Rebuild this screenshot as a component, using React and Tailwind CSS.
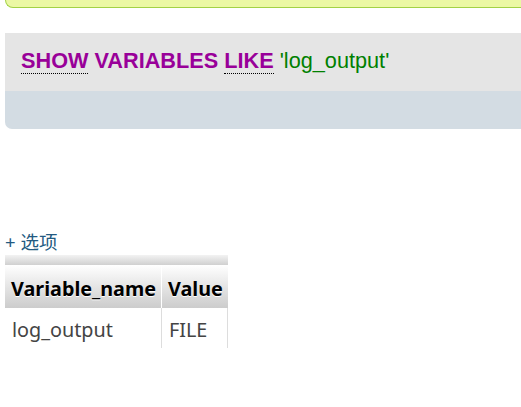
import React from "react";

const App = () => {
  return (
    <div className="w-[521px] h-[407px] overflow-hidden bg-white relative">
      {/* notice bar */}
      <div className="ml-[5px] w-[530px] h-[8px] bg-[#ebf8a4] border-l border-b border-[#a2d246] rounded-bl-[10px]" />

      {/* sql query box */}
      <div className="ml-[5px] mt-[25px] w-[530px] rounded-bl-[7px] overflow-hidden">
        <div className="h-[58px] bg-[#e5e5e5] pl-[16px] pt-[15px] font-['Liberation_Sans',Arial,sans-serif] text-[21.7px] leading-[26px] whitespace-nowrap">
          <span className="font-bold text-[#990099] border-b border-dotted border-black">SHOW</span>{" "}
          <span className="font-bold text-[#990099]">VARIABLES</span>{" "}
          <span className="font-bold text-[#990099] border-b border-dotted border-black">LIKE</span>{" "}
          <span className="text-[#008000]">'log_output'</span>
        </div>
        <div className="h-[38px] bg-[#d3dce3]" />
      </div>

      {/* options link */}
      <div className="mt-[100px] ml-[5px] font-['Noto_Sans','Noto_Sans_CJK_SC',sans-serif] text-[18.5px] leading-[26px] text-[#235a81]">
        + 选项
      </div>

      {/* result table */}
      <div className="ml-[5px] w-[223px] font-['Noto_Sans','Open_Sans',sans-serif]">
        <div className="h-[10px] bg-gradient-to-b from-[#f3f3f3] to-[#d0d0d0]" />
        <div className="flex h-[43px] bg-gradient-to-b from-white to-[#cccccc]">
          <div className="w-[157px] pl-[6px] pt-[4px] flex items-center font-bold text-[19.8px] text-black [text-shadow:0_1px_0_#fff] border-r border-white whitespace-nowrap">
            Variable_name
          </div>
          <div className="flex-1 pl-[6px] pt-[4px] flex items-center font-bold text-[19.8px] text-black [text-shadow:0_1px_0_#fff]">
            Value
          </div>
        </div>
        <div className="flex h-[40px] bg-white">
          <div className="w-[157px] pl-[7px] pt-[4px] flex items-center text-[19.8px] text-[#444] border-r border-[#dddddd]">
            log_output
          </div>
          <div className="flex-1 pl-[7px] pt-[4px] flex items-center text-[19.8px] text-[#444] border-r border-[#dddddd]">
            FILE
          </div>
        </div>
      </div>
    </div>
  );
};

export default App;
